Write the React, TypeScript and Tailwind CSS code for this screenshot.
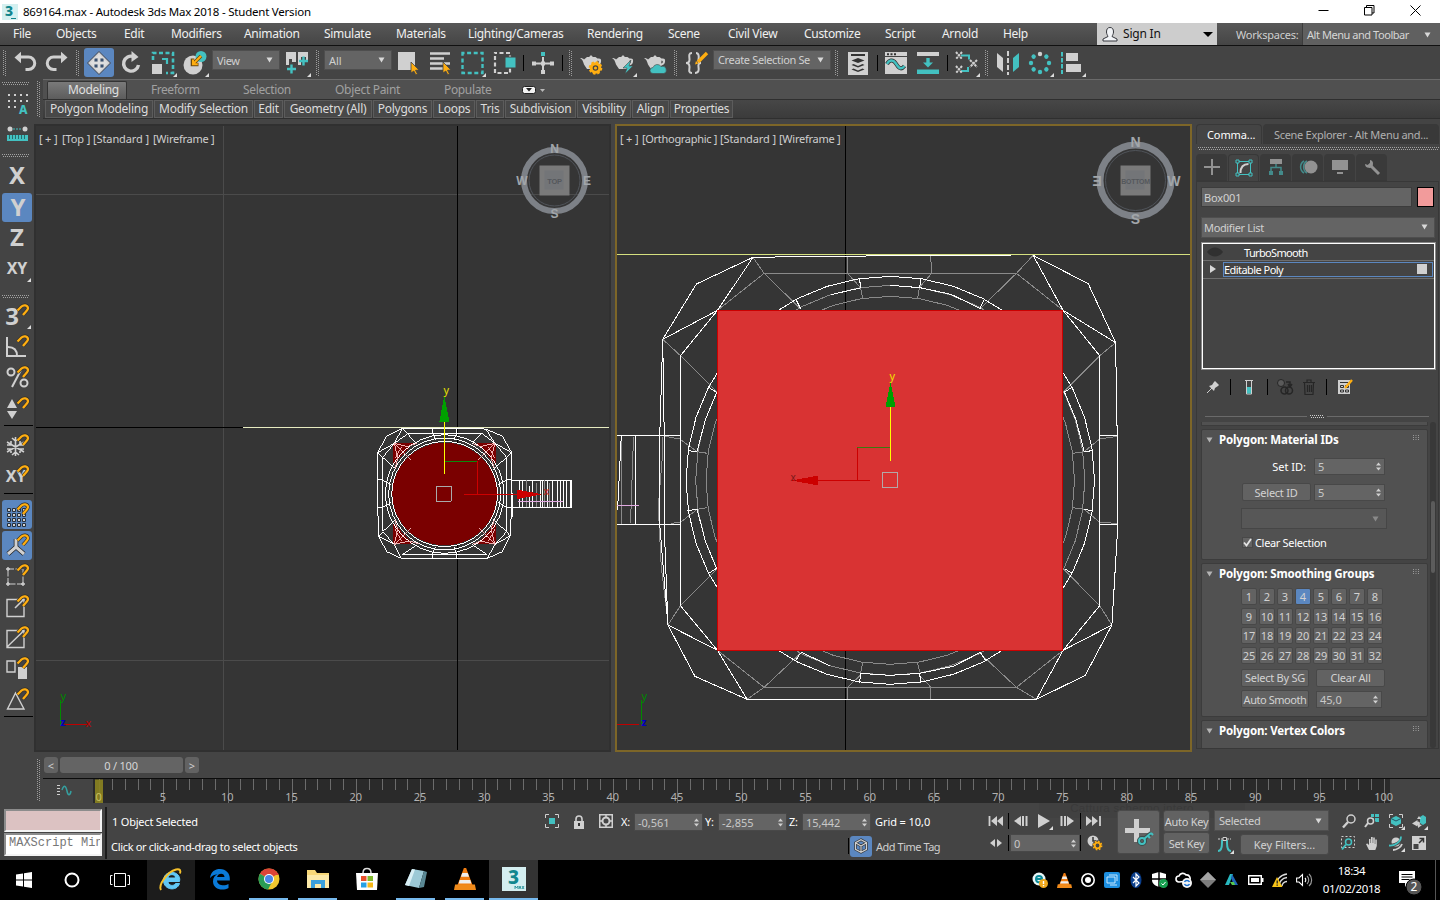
import React from 'react';

type Kids = { children?: React.ReactNode };

const W = '#d0d0d0';
const T = '#43c1c1';
const O = '#ffae10';

/* ---------- small building blocks ---------- */

function Ico({ children, w = 24, h = 24, corner = false }: Kids & { w?: number; h?: number; corner?: boolean }) {
  return (
    <svg width={w} height={h} viewBox={`0 0 ${w} ${h}`} fill="none" className="block shrink-0 overflow-visible">
      {children}
      {corner && <path d={`M${w + 2} ${h - 2}v4h-4z`} fill="#ddd" />}
    </svg>
  );
}

const Slot = ({ children, on = false }: Kids & { on?: boolean }) => (
  <div className="flex h-full w-8 shrink-0 items-center justify-center">
    <div className={on ? 'flex h-[29px] w-[30px] items-center justify-center rounded-[3px] bg-[#5b87c0]' : 'flex items-center justify-center'}>{children}</div>
  </div>
);

const VHandle = ({ cls }: { cls: string }) => (
  <div className={`flex shrink-0 justify-center ${cls}`}>
    <svg width="4" height="100%" className="block">
      <line x1="0.5" y1="0" x2="0.5" y2="100%" stroke="#9c9c9c" strokeDasharray="1 1" />
      <line x1="2.5" y1="1" x2="2.5" y2="100%" stroke="#9c9c9c" strokeDasharray="1 1" />
    </svg>
  </div>
);

const HHandle = ({ cls }: { cls: string }) => (
  <div className={`flex shrink-0 flex-col justify-center ${cls}`}>
    <svg width="100%" height="4" className="block">
      <line x1="0" y1="0.5" x2="100%" y2="0.5" stroke="#a2a2a2" strokeDasharray="1 1" />
      <line x1="1" y1="2.5" x2="100%" y2="2.5" stroke="#a2a2a2" strokeDasharray="1 1" />
    </svg>
  </div>
);

const VSep = ({ cls }: { cls: string }) => (
  <div className={`flex shrink-0 items-center justify-center ${cls}`}>
    <div className="h-4 w-px bg-black" />
  </div>
);

const Down = ({ c = '#d8d8d8' }: { c?: string }) => (
  <svg width="7" height="6" className="block shrink-0"><path d="M0.5 0.5h6L3.5 5.5z" fill={c} /></svg>
);

const Combo = ({ text, cls }: { text: string; cls: string }) => (
  <div className={`flex shrink-0 items-center justify-between border border-[#4e4e4e] bg-[#646464] pr-[6px] pl-[5px] text-[#d0d0d0] ${cls}`}>
    <span className="whitespace-nowrap">{text}</span>
    <Down />
  </div>
);

const Updown = () => (
  <svg width="5" height="9" className="block shrink-0"><path d="M0 3.5h5L2.5 0.5zM0 5.5h5L2.5 8.5z" fill="#d0d0d0" /></svg>
);

const Spin = ({ v, cls }: { v: string; cls: string }) => (
  <div className={`flex shrink-0 items-center justify-between border border-[#484848] bg-[#646464] pr-[3px] pl-[3px] tracking-normal text-[#c8c8c8] ${cls}`}>
    <span>{v}</span>
    <Updown />
  </div>
);

const Btn = ({ children, cls }: Kids & { cls: string }) => (
  <div className={`flex shrink-0 items-center justify-center rounded-[2px] border border-[#484848] bg-[#626262] whitespace-nowrap text-[#d2d2d2] ${cls}`}>{children}</div>
);

/* ---------- title + menu ---------- */

function TitleBar() {
  return (
    <div className="flex h-[23px] shrink-0 items-center bg-white pl-[2px] text-black">
      <div className="flex h-4 w-4 items-center justify-center bg-[#d4f0f0]">
        <Ico w={16} h={16}>
          <text x="3" y="12" fontSize="14" fontWeight="800" fill="#11858c" fontFamily="Noto Sans">3</text>
          <path d="M9 14.5h5" stroke="#11858c" />
        </Ico>
      </div>
      <span className="ml-[5px] text-[11.500px] tracking-[-0.220px] whitespace-nowrap">869164.max - Autodesk 3ds Max 2018 - Student Version</span>
      <div className="ml-auto flex h-full items-center pb-[2px]">
        <div className="flex w-[45px] justify-center"><Ico w={11} h={11}><path d="M0.5 5.5h10" stroke="#000" /></Ico></div>
        <div className="flex w-[46px] justify-center"><Ico w={11} h={11}><path d="M0.5 2.5h7.500v7.500h-7.500zM2.500 2.500v-2h7.500v7.500h-2" stroke="#000" /></Ico></div>
        <div className="flex w-[48px] justify-center pr-[2px]"><Ico w={11} h={11}><path d="M0.500 0.500l10 10M10.500 0.500l-10 10" stroke="#000" /></Ico></div>
      </div>
    </div>
  );
}

const MENUS: [string, string][] = [
  ['File', 'w-[43px]'], ['Objects', 'w-[68px]'], ['Edit', 'w-[47px]'], ['Modifiers', 'w-[73px]'], ['Animation', 'w-[80px]'],
  ['Simulate', 'w-[72px]'], ['Materials', 'w-[72px]'], ['Lighting/Cameras', 'w-[119px]'], ['Rendering', 'w-[81px]'], ['Scene', 'w-[60px]'],
  ['Civil View', 'w-[76px]'], ['Customize', 'w-[81px]'], ['Script', 'w-[57px]'], ['Arnold', 'w-[61px]'], ['Help', 'w-[94px]'],
];

function MenuBar() {
  return (
    <div className="flex h-[23px] shrink-0 items-center border-b border-[#111] bg-gradient-to-b from-[#585858] to-[#454545] pl-[13px] tracking-[-0.300px] text-[#f0f0f0]">
      {MENUS.map(([t, w]) => <div key={t} className={`shrink-0 whitespace-nowrap ${w}`}>{t}</div>)}
      <div className="flex h-full w-[120px] shrink-0 items-center bg-[#cdcdcd] pl-[5px] text-[#111]">
        <Ico w={16} h={16}>
          <path d="M4.500 6a3.500 4.500 0 0 1 7 0c0 2-1 3-1.500 4.500l5 2.500v2H1v-2l5-2.500C5.500 9 4.500 8 4.500 6z" fill="#f2f4f7" stroke="#34363c" />
        </Ico>
        <span className="ml-[5px] tracking-[-0.200px]">Sign In</span>
        <svg width="10" height="5" className="mr-1 ml-auto block"><path d="M0 0h10L5 5z" fill="#000" /></svg>
      </div>
      <span className="ml-[19px] w-[66px] shrink-0 pt-px text-[11px] tracking-[-0.220px] whitespace-nowrap text-[#cfcfcf]">Workspaces:</span>
      <div className="flex h-full flex-1 items-center border-l border-[#3c3c3c] bg-[#606060] pt-px pl-1 text-[11px] tracking-[-0.450px] whitespace-nowrap text-[#d6d6d6]">
        Alt Menu and Toolbar
        <span className="mr-[9px] ml-auto"><Down /></span>
      </div>
    </div>
  );
}

/* ---------- main toolbar ---------- */

const Teapot = () => (
  <path d="M1 7c2 0 3 .5 4 1.500L8 6h2.500c0-1 .5-1.500 1.500-1.500s1.500.5 1.500 1.500h3l2 1.500c3-.5 4 .5 3.500 3.500-.3 2-1.500 3-3.500 3.500L17 18H8l-3-4.500C4 10 3 8 1 7zm17.500 2.500l-.3 3c2 0 2.300-3 .3-3z" fill={W} />
);
const Cursor = () => <path d="M15 11l8 8-3.500.3 2 3.700-1.700.8-2-3.800L15 22z" fill={O} stroke="#444" strokeWidth=".8" />;

function MainToolbar() {
  return (
    <div className="flex h-[33px] shrink-0 items-center bg-[#444]">
      <VHandle cls="h-[26px] w-[9px]" />
      <Slot><Ico><path d="M6 6h9.500a5.500 5.500 0 0 1 0 12.500h-3" stroke={W} strokeWidth="3" /><path d="M1.500 6.500L8 .8v11.400z" fill={W} /></Ico></Slot>
      <Slot><Ico><path d="M18 6H8.500a5.500 5.500 0 0 0 0 12.500h3" stroke={W} strokeWidth="3" /><path d="M22.500 6.500L16 .8v11.400z" fill={W} /></Ico></Slot>
      <VHandle cls="h-[26px] w-[10px]" />
      <Slot on>
        <Ico>
          <path d="M12 .5L23.500 12 12 23.500.5 12z" fill={W} stroke="#3a4250" />
          <path d="M12 3l4 4H8zM12 21l4-4H8zM3 12l4-4v8zM21 12l-4-4v8zM11 7h2v10h-2zM7 11h10v2H7z" fill="#dedede" />
          <path d="M8 7.500h2.500v3H7.500V8zM13.500 7.500H16l.5.500v2.500h-3zM7.500 13.500h3v3H8l-.5-.5zM13.500 13.500h3V16l-.5.500h-2.500z" fill="#39506f" />
        </Ico>
      </Slot>
      <Slot><Ico><path d="M14.500 5.500A7.500 7.500 0 1 0 19.500 14" stroke={W} strokeWidth="3.400" /><path d="M12.500 0l7 6-7 5z" fill={W} /></Ico></Slot>
      <Slot>
        <Ico corner>
          <path d="M2 9V2h20v20h-7" stroke={T} strokeWidth="2.600" strokeDasharray="4 2.500" />
          <path d="M1 13h10v10H1z" fill={W} /><path d="M11 8h5v5" stroke={T} strokeWidth="2.200" />
        </Ico>
      </Slot>
      <Slot>
        <Ico corner>
          <circle cx="10" cy="14" r="9.500" fill={W} /><circle cx="18" cy="5.500" r="5.500" fill={T} />
          <path d="M18 5l-8 8M9.500 7.500v6h6" stroke="#6b4a10" strokeWidth="3.600" /><path d="M18 5l-8 8M10 8.500v4.800h4.800" stroke={O} strokeWidth="2" />
        </Ico>
      </Slot>
      <Combo text="View" cls="ml-px h-5 w-[68px] mb-[5px] !pl-[4px] text-[11px] tracking-[-0.400px]" />
      <div className="w-px shrink-0" />
      <Slot>
        <Ico corner><path d="M1 1h10v10H7v-3H4v6H1zM13 1h10v10h-2V6h-5v8h-3z" fill={W} /><path d="M2 18h9M6.500 13.500v9M14 10h9M18.500 5.500v9" stroke={T} strokeWidth="2.400" /></Ico>
      </Slot>
      <VHandle cls="h-[26px] w-[10px]" />
      <Combo text="All" cls="ml-px h-5 w-[68px] mb-[5px] !pl-[4px] text-[11px]" />
      <Slot><Ico><path d="M2 1h17v18H2z" fill={W} /><Cursor /></Ico></Slot>
      <Slot><Ico><path d="M2 2.500h20M2 7.500h14M2 12.500h20M2 17.500h13" stroke={W} strokeWidth="2.400" /><Cursor /></Ico></Slot>
      <Slot><Ico corner><path d="M2.500 2h20v20h-20z" stroke={T} strokeWidth="2.400" strokeDasharray="4 2.600" strokeDashoffset="2" /></Ico></Slot>
      <Slot><Ico><path d="M3 2h15v20H3z" stroke={W} strokeWidth="2.200" strokeDasharray="4 2.500" strokeDashoffset="2" /><path d="M13 6h11v11H13z" fill={T} stroke="#444" /></Ico></Slot>
      <VSep cls="w-[7px]" />
      <Slot><Ico><path d="M12 6v17M1 12.500h22" stroke={W} strokeWidth="2" /><path d="M10 1h4v4h-4z" fill={T} /><path d="M1 10.500h4v4H1zM19 10.500h4v4h-4zM10 19h4v4h-4zM10 10.500h4v4h-4z" fill={W} /></Ico></Slot>
      <VSep cls="w-[7px]" />
      <VHandle cls="h-[26px] w-[9px]" />
      <Slot><Ico><Teapot /><circle cx="16.500" cy="17" r="4.300" stroke={O} strokeWidth="3" fill="#444" /><circle cx="16.500" cy="17" r="5.800" stroke={O} strokeWidth="2" strokeDasharray="2.500 2" /><circle cx="16.500" cy="17" r="1.600" fill={O} /></Ico></Slot>
      <Slot><Ico corner><Teapot /><path d="M20 9l-8 8h4l-2 6 8-8h-4z" fill={T} stroke="#444" strokeWidth=".6" /></Ico></Slot>
      <Slot><Ico><Teapot /><path d="M10 22.500a3 3 0 0 1 0-6 4.500 4.500 0 0 1 8-1 3.500 3.500 0 0 1 3 7z" fill={T} stroke="#444" strokeWidth=".6" /></Ico></Slot>
      <VHandle cls="h-[26px] w-[10px]" />
      <Slot>
        <Ico>
          <path d="M7 2C3 2 4.500 6 4.500 8.500S3 12 1 12c2 0 3.500 1.500 3.500 4S3 22 7 22M11 2c3 0 3 4 2.500 6.500S14 12 16 12c-2 0-3 1.500-2.500 4S14 22 10 22" stroke={W} strokeWidth="2" />
          <path d="M22 2l-9 9" stroke={O} strokeWidth="3.400" /><path d="M10 13.500l1-3.500 2.500 2.500z" fill={O} />
        </Ico>
      </Slot>
      <Combo text="Create Selection Se" cls="h-5 w-[118px] mb-[6px] !pl-[4px] text-[11px] tracking-[-0.350px]" />
      <VHandle cls="ml-px h-[26px] w-[10px]" />
      <Slot>
        <Ico><path d="M2 1h20v23H2z" fill={W} /><path d="M5 4h14" stroke="#333" strokeWidth="2" /><path d="M5.500 9.500l6.500-2.500 6.500 2.500L12 12zM5.500 14l2-1 4.500 2 4.500-2 2 1-6.500 2.500zM5.500 18.500l2-1 4.500 2 4.500-2 2 1-6.500 2.500z" fill="#333" /></Ico>
      </Slot>
      <VSep cls="w-[6px]" />
      <Slot>
        <Ico><path d="M1 1h22v22H1z" fill={W} /><path d="M1 5.500h22" stroke="#444" /><path d="M3 3.200h2M6.500 3.200h2M10 3.200h2" stroke="#333" strokeWidth="2" /><path d="M3 13c2-4 6-5 8.500-1s5 8 9 3" stroke="#333" strokeWidth="4" /><path d="M3 13c2-4 6-5 8.500-1s5 8 9 3" stroke={T} strokeWidth="2.400" /></Ico>
      </Slot>
      <Slot><Ico><path d="M1 1h22v4H1z" fill={W} /><path d="M1 18.500h22v4.500H1z" fill={T} /><path d="M12 7v6" stroke={T} strokeWidth="3.400" /><path d="M7 11.500h10l-5 5z" fill={T} /></Ico></Slot>
      <VSep cls="w-[6px]" />
      <Slot>
        <Ico corner>
          <path d="M7 4.500h8v4M7 20h7v-4" stroke={T} strokeWidth="2" />
          <path d="M2 1l6 7M8 1L2 8M2 15l6 7M8 15l-6 7M16 9l7 7M23 9l-7 7" stroke={W} strokeWidth="2" strokeDasharray="2.400 .8" />
        </Ico>
      </Slot>
      <VHandle cls="h-[26px] w-[10px]" />
      <Slot><Ico><path d="M1 2l6 5v14l-6-5z" fill={W} /><path d="M12 0v24" stroke={W} strokeWidth="2" strokeDasharray="5 2" /><path d="M23 2l-6 5v14l6-5z" fill={T} /></Ico></Slot>
      <Slot>
        <Ico corner>
          <circle cx="12" cy="3" r="2.200" fill={W} />
          {[45, 90, 135, 180, 225, 270, 315].map((a) => <circle key={a} cx="12" cy="3" r="2.200" fill={T} transform={`rotate(${a} 12 12)`} />)}
        </Ico>
      </Slot>
      <Slot><Ico corner><path d="M2 1v22" stroke={T} strokeWidth="2" strokeDasharray="4.500 1.500" /><path d="M6 2h12v8H6zM6 13h15v8H6z" fill={W} /></Ico></Slot>
    </div>
  );
}

/* ---------- left toolbar ---------- */

const Side = ({ children, on = false }: Kids & { on?: boolean }) => (
  <div className={on ? 'my-px flex h-[29px] w-[30px] shrink-0 items-center justify-center rounded-[3px] bg-[#5b87c0] pb-px' : 'flex h-[31px] w-[30px] shrink-0 items-center justify-center pb-[3px]'}>{children}</div>
);
const Magnet = () => (
  <>
    <path d="M12.500 7.500l4-4c2-2 6-1.500 6.500 1.500.3 2-3 4-5 7" stroke="#33302a" strokeWidth="3.600" />
    <path d="M12.500 7.500l4-4c2-2 6-1.500 6.500 1.500.3 2-3 4-5 7" stroke={O} strokeWidth="2.300" />
  </>
);
const BigLetter = ({ t, s = 24, x = 12, y = 21 }: { t: string; s?: number; x?: number; y?: number }) => (
  <text x={x} y={y} textAnchor="middle" fontFamily="Noto Sans" fontWeight="700" fontSize={s} fill={W}>{t}</text>
);
const HSep = ({ cls }: { cls: string }) => <div className={`w-[29px] shrink-0 ${cls}`}><div className="h-px w-full bg-black" /></div>;

function LeftBar() {
  return (
    <div className="flex w-[34px] shrink-0 flex-col items-start bg-[#444] pl-[2px]">
      <HHandle cls="h-[9px] w-[27px]" />
      <Side><Ico>{[0, 1, 2].map((r) => [0, 1, 2, 3].map((c) => (r === 2 && c > 1 ? null : <path key={`${r}${c}`} d={`M${3 + c * 6} ${4 + r * 6}h2v2h-2z`} fill={W} />)))}<text x="14" y="24" fontSize="12" fontWeight="800" fill={T} fontFamily="Noto Sans">A</text></Ico></Side>
      <Side><Ico><circle cx="5" cy="8" r="2.500" fill={W} /><circle cx="20" cy="8" r="2.500" fill={W} /><path d="M8 8h9" stroke={T} strokeDasharray="2 1" /><path d="M2 14h21v6H2z" fill={T} /><path d="M4.500 14v4M7.500 14v4M10.500 14v4M13.500 14v4M16.500 14v4M19.500 14v4" stroke="#2a6a6a" /></Ico></Side>
      <HHandle cls="h-[11px] w-[27px]" />
      <Side><Ico><BigLetter t="X" /></Ico></Side>
      <Side on><Ico><BigLetter t="Y" x={13} /></Ico></Side>
      <Side><Ico><BigLetter t="Z" /></Ico></Side>
      <Side><Ico corner><BigLetter t="XY" s={16} x={12} y={18} /></Ico></Side>
      <HHandle cls="h-[16px] w-[27px] pt-[7px]" />
      <Side><Ico corner><BigLetter t="3" x={7} y={21.5} /><Magnet /></Ico></Side>
      <Side><Ico><path d="M2 3v19h19M3 13c6 0 9 3 9 9" stroke={W} strokeWidth="2" /><Magnet /></Ico></Side>
      <Side><Ico><circle cx="6" cy="7" r="3.500" stroke={W} strokeWidth="2" /><circle cx="19" cy="18" r="3.500" stroke={W} strokeWidth="2" /><path d="M17 3L7 22" stroke={W} strokeWidth="2" /><Magnet /></Ico></Side>
      <Side><Ico><path d="M2 12h10L7 3zM2 15h10l-5 8z" fill={W} /><Magnet /></Ico></Side>
      <HSep cls="ml-[2px] h-[6px]" />
      <Side><Ico><path d="M10.500 4v19M2 9l17 10M19 9L2 19M7 5l3.500 3L14 5M7 22l3.500-3 3.500 3M2 12h4V8M2 16h4v4M19 12h-4V8M19 16h-4v4" stroke={W} strokeWidth="1.600" /><Magnet /></Ico></Side>
      <Side><Ico><BigLetter t="XY" s={16} x={11} y={18} /><Magnet /></Ico></Side>
      <HSep cls="ml-[2px] h-[6px]" />
      <Side on><Ico>{[0, 1, 2, 3].map((r) => [0, 1, 2, 3].map((c) => <path key={`${r}${c}`} d={`M${2.500 + c * 5} ${6.500 + r * 5}h3v3h-3z`} fill={W} stroke="#26303c" />))}<Magnet /></Ico></Side>
      <Side on><Ico><path d="M11 6v8L3 21M11 14l8 7" stroke="#222" strokeWidth="4.500" /><path d="M11 6v8L3 21M11 14l8 7" stroke={W} strokeWidth="3" /><Magnet /></Ico></Side>
      <Side><Ico><path d="M3 6h15v15H3z" stroke={W} strokeDasharray="6 1.500" /><path d="M1 6h4M3 4v4M1 21h4M3 19v4M16 21h4M18 19v4" stroke={W} strokeWidth="1.400" /><Magnet /></Ico></Side>
      <Side><Ico><path d="M2 5.500h17v17H2z" stroke={W} strokeWidth="1.400" /><path d="M10 14l9-9" stroke={W} strokeWidth="1.600" /><Magnet /></Ico></Side>
      <Side><Ico><path d="M2 5.500h17v17H2zM2 22L19 5.500" stroke={W} strokeWidth="1.400" /><Magnet /></Ico></Side>
      <Side><Ico><path d="M2 5h8v11H2z" stroke={W} strokeWidth="1.400" /><path d="M13 11h9v12h-9z" fill={W} /><Magnet /></Ico></Side>
      <Side><Ico><path d="M10.500 6L2.500 22H19z" stroke={W} strokeWidth="1.400" /><Magnet /></Ico></Side>
      <HSep cls="ml-[2px] h-[6px]" />
    </div>
  );
}

/* ---------- ribbon ---------- */

const RIBBON: [string, string][] = [
  ['Polygon Modeling', 'w-[108px]'], ['Modify Selection', 'w-[99px]'], ['Edit', 'w-[29px]'], ['Geometry (All)', 'w-[88px]'], ['Polygons', 'w-[59px]'],
  ['Loops', 'w-[42px]'], ['Tris', 'w-[28px]'], ['Subdivision', 'w-[71px]'], ['Visibility', 'w-[54px]'], ['Align', 'w-[37px]'], ['Properties', 'w-[63px]'],
];

function Ribbon() {
  return (
    <div className="flex h-[40px] shrink-0">
      <VHandle cls="mt-[2px] h-[36px] w-[9px]" />
      <div className="flex flex-1 flex-col border-t border-[#6a6a6a] bg-[#505050]">
        <div className="flex h-[19px] items-end pl-1 text-[#a0a0a0]">
          <div className="flex h-[18px] w-[80px] items-center rounded-t-[2px] border border-b-0 border-[#333] bg-gradient-to-b from-[#7a7a7a] to-[#5c5c5c] pb-px pl-[20px] tracking-[-0.300px] text-[#e0e0e0]">Modeling</div>
          <span className="mb-[3px] ml-[24px] w-[92px] tracking-[-0.450px]">Freeform</span>
          <span className="mb-[3px] w-[92px] tracking-[-0.350px]">Selection</span>
          <span className="mb-[3px] w-[109px] tracking-[-0.300px]">Object Paint</span>
          <span className="mb-[3px] w-[78px] tracking-[-0.350px]">Populate</span>
          <svg width="26" height="12" className="mb-[3px] block"><rect x=".5" y="2.500" width="13" height="7" rx="2" fill="#f2f2f2" stroke="#222" /><path d="M4 4h6L7 7.500z" fill="#222" /><path d="M18 5h5l-2.500 3z" fill="#b8b8b8" /></svg>
        </div>
        <div className="flex h-[20px] items-center border-y border-[#2f2f2f] bg-gradient-to-b from-[#474747] to-[#3b3b3b] pl-[2px] tracking-[-0.260px] text-[#dcdcdc]">
          {RIBBON.map(([t, w]) => <div key={t} className={`mr-px flex h-[18px] shrink-0 items-center justify-center border border-[#5c5c5c] bg-[#484848] whitespace-nowrap ${w}`}>{t}</div>)}
        </div>
      </div>
    </div>
  );
}

/* ---------- viewports ---------- */

const Ring = ({ cx, cy, r, w, face, flip }: { cx: number; cy: number; r: number; w: number; face: string; flip?: boolean }) => {
  const d = r + (flip ? 3 : 2);
  const size = flip ? 14 : 12;
  const letter = (t: string, x: number, y: number, m = false) => (
    <text transform={`translate(${x} ${y + size / 3 + 0.5}) scale(${m ? -1 : 1} 1)`} textAnchor="middle" fontSize={size} fontWeight="700" fill="#a2a6aa" fontFamily="Liberation Sans">{t}</text>
  );
  return (
    <g>
      <circle cx={cx} cy={cy} r={r} fill="none" stroke="#7d8187" strokeWidth={w} />
      <circle cx={cx} cy={cy} r={r - w / 2 - 2} fill="none" stroke="#50545a" strokeWidth="1" />
      <rect x={cx - 15} y={cy - 15} width="30" height="30" fill="#7a7a7a" />
      <rect x={cx - 10} y={cy - 10} width="19" height="19" fill="#737578" />
      <text x={cx} y={cy + 3} textAnchor="middle" fontSize={flip ? 7 : 7.5} letterSpacing="-.3" fontWeight="700" fill="#55585c" fontFamily="Liberation Sans">{face}</text>
      {letter('N', cx, cy - d)}
      {letter('S', cx, cy + d)}
      {letter('W', flip ? cx + d : cx - d, cy, flip)}
      {letter('E', flip ? cx - d : cx + d, cy, flip)}
    </g>
  );
};

const LABEL = 'absolute top-[7px] left-[3px] flex text-[11px] leading-none tracking-[-0.100px] whitespace-pre text-[#cfcfcf]';

function TopView() {
  return (
    <div className="relative h-full w-[577px] shrink-0 border-2 border-[#303030] bg-[#353535]">
      <svg width="573" height="624" viewBox="36 126 573 624" className="block" fill="none">
        <g shapeRendering="crispEdges">
          <path d="M223.500 126v624M36 194.500h573M36 660.500h573" stroke="#4b4b4b" />
          <path d="M457.500 126v624M36 427.500h207" stroke="#000" />
          <path d="M243 427.500h366" stroke="#e6ebc0" />
          <g transform="translate(360 380) scale(.33333)">
            <ellipse cx="254" cy="342" rx="157" ry="154" fill="#7a0000" />
            <path d="M100 190h60l-60 65zM407 190h-55l55 65zM100 493h60l-60-65zM407 493h-55l55-65z" fill="#7a0000" />
            <g stroke="#fff" strokeWidth="3">
              <path d="M127 145L80 168 53 218v167l4 85 23 45 44 20h258l45-20 23-47 5-83V218l-28-50-49-20-18-3z" />
              <path d="M145 160h220M127 145l42 45M68 232v222M440 232v222M127 524h254M53 218l50-28 24-45M53 218l15 14 40 36M378 148l27 42 50 28M455 218l-15 14-40 36M57 470l46 23 21 42M57 470l11-15 40-36M450 468l-45 25-23 42M450 468l-10-13-40-36M127 524l45-30M381 524l-45-30M365 160l-30 32" />
              <path d="M68 232l35-42M440 232l-35-42M68 455l35 38M440 455l-35 38M145 160l-42 30M365 160l40 30" />
              <path d="M218 145v15l10 20M290 145v15l-8 20M218 535v-15l8-18M290 535v-15l-8-18M53 300h15l25 14M53 382h15l25-14M455 300h-15l-25 14M455 382h-15l-25-14" />
              <ellipse cx="254" cy="342" rx="178" ry="178" />
              <ellipse cx="254" cy="342" rx="168" ry="168" />
              <ellipse cx="254" cy="342" rx="159" ry="158" />
              <path d="M455 301h180v81H455M455 262l2 150M478 301v81M489 301v81M508 318v64M517 301v81M541 301v81M548 301v81M562 301v81M577 301v81M594 301v81M603 301v81M612 301v81M621 301v81M631 301v81" />
              <path d="M500 301v81M530 310v72M555 301v81M569 310v72" stroke="#8a8a8a" />
            </g>
            <path d="M103 190l50 50M103 190l40 10 28-10M103 190l10 45-8 30M405 190l-50 50M405 190l-45 10-22-10M405 190l-12 45 10 30M103 493l50-50M103 493l45-10 28 8M103 493l10-45-8-28M405 493l-50-50M405 493l-45-10-22 10M405 493l-12-45 10-28M125 200l-20 35M385 200l20 35M125 483l-20-35M385 483l20-35" stroke="#f0b0b0" strokeWidth="3" />
            <path d="M475 364h133" stroke="#e0a8e0" strokeWidth="3" />
            <path d="M253.500 244h99" stroke="#0a8a0a" strokeWidth="3" />
            <path d="M352.500 244v99M312 343.500h160" stroke="#cc0000" strokeWidth="3" />
            <path d="M253.500 125v156" stroke="#ffff00" strokeWidth="3" />
            <path d="M253 48l15 77h-30z" fill="#00a000" />
            <path d="M547 343l-75 14v-28z" fill="#cc0000" />
            <path d="M229.500 319.500h45v45h-45z" stroke="#aaa" strokeWidth="3" />
          </g>
          <path d="M60.500 700v25" stroke="#008a00" />
          <path d="M64 724.500h23" stroke="#c00000" />
        </g>
        <g fontFamily="Noto Sans" fontSize="11">
          <text x="443.500" y="394" fill="#e6e000">y</text>
          <text x="543.500" y="495" fill="#cc2020">x</text>
          <text x="60.500" y="700" fill="#008a00">y</text>
          <text x="85.500" y="727" fill="#c00000">x</text>
          <text x="60.500" y="726" fill="#0000c8" fontWeight="700" fontSize="10">z</text>
        </g>
        <Ring cx={554.500} cy={180.500} r={30.500} w={6} face="TOP" />
      </svg>
      <div className={LABEL}>
        <span className="w-[23px] tracking-[2.500px]">[+]</span>
        <span className="w-[31px]">[Top ]</span>
        <span className="w-[60px]">[Standard ]</span>
        <span className="tracking-[-0.250px]">[Wireframe ]</span>
      </div>
    </div>
  );
}

const ringPoints = (rx: number, ry: number) =>
  Array.from({ length: 40 }, (_, i) => {
    const a = (i * Math.PI) / 20;
    return `${(744 + rx * Math.sin(a)).toFixed(1)},${(721 - ry * Math.cos(a)).toFixed(1)}`;
  }).join(' ');

function OrthoView() {
  return (
    <div className="relative ml-[4px] h-full w-[577px] shrink-0 border-2 border-[#7d6628] bg-[#353535]">
      <svg width="573" height="624" viewBox="617 126 573 624" className="block" fill="none">
        <g shapeRendering="crispEdges">
          <path d="M845.500 126v624" stroke="#000" />
          <g transform="translate(615 240) scale(.37 .33333)">
            <g stroke="#8a8a8a" className="[&>*]:[vector-effect:non-scaling-stroke]">
              <path d="M373 52l30 48h682l45-54M628 50v50l35 42M853 47l3 53-33 42M403 100L277 211M403 100l98 106M1085 100l126 111M1085 100l-98 106" />
              <path d="M129 298l48 49 98 108M1353 308l-43 39-97 108M143 1155l34-58 98-109M1343 1155l-33-58-97-109" />
              <path d="M357 1378l46-36h682l54 36M403 1342l-126-111M403 1342l100-104M1085 1342l126-111M1085 1342l-100-104M628 1378v-36l34-35M854 1378v-36l-30-35" />
              <path d="M135 589l40 8 47 38M150 850l27-3 45-39M1357 589l-47 8-42 38M1357 850l-47-3-42-39" />
              <path d="M664 145l5 28M823 143l-5 30M664 1300l5-30M825 1300l-7-30M222 635l28 5M222 808l28-5M1268 635l-30 5M1268 808l-30-5" />
              <path d="M128 590v60L117 800l8 180 13 120M50 590L42 850M17 590v262" />
              <polygon points={ringPoints(498, 552)} />
              <polygon points={ringPoints(526, 585)} />
            </g>
            <g stroke="#fff" className="[&>*]:[vector-effect:non-scaling-stroke]">
              <polygon points={ringPoints(552, 612)} />
              <path d="M744 136l80 7 84 20 80 43M663 144l-80 20M502 1236l80 42M663 1300l81 6 80-6 90-21 74-42M222 634l22-94 31-83M222 808l22 95 31 84M1268 634l-22-94-31-83" />
              <path d="M373 52L220 132l-91 166-8 287v270l22 300 73 154 141 69h782l132-72 72-151 16-300-2-285-4-262-74-177-149-85" />
              <path d="M373 52l180-3 255-2h262M373 52l-96 159-100 136v750l100 134 80 147M129 298l148-87M143 1155l134 76M1130 46l81 165 99 136v750l-99 134-72 147M1353 308l-142-97M1343 1155l-132 76" />
              <path d="M129 298l4 287v270l10 300M5 586h172M5 853h172M1310 586h49M1310 853h49M56 586v267M17 586L7 810" />
              <path d="M661 116l3 28M827 116l-4 28M490 180l12 27M998 178l-12 28M196 632l26 3M196 812l26-4M1290 632l-22 3M1290 812l-22-4M661 1328l3-28M827 1328l-4-28M488 1262l14-24M1002 1262l-14-24M253 442l20 14M253 1000l20-14M1235 442l-20 14M1235 1000l-20-14" />
            </g>
            <path d="M5 797h60" stroke="#e0a8e0" className="[vector-effect:non-scaling-stroke]" />
          </g>
          <path d="M617 254.500h573" stroke="#d5e07f" />
          <path d="M717.500 310.500h345v340h-345z" fill="#d93333" stroke="#cc0000" />
          <path d="M857 447.500h33" stroke="#3c7a10" />
          <path d="M857.500 448v32M818 480.500h52" stroke="#cc0000" />
          <path d="M890.500 407v54" stroke="#ffff00" />
          <path d="M890.500 382l5 25h-10z" fill="#00a000" />
          <path d="M792 480.500l26-5v10z" fill="#cc0000" />
          <path d="M882.500 472.500h15v15h-15z" stroke="#b4a8a8" />
          <path d="M641.500 700v24" stroke="#008a00" />
          <path d="M617 724.500h22" stroke="#c00000" />
        </g>
        <g fontFamily="Noto Sans" fontSize="11">
          <text x="889.500" y="380" fill="#f0e000">y</text>
          <text x="790.500" y="481" fill="#7a1a1a" fontSize="10">x</text>
          <text x="641.500" y="700" fill="#008a00">y</text>
          <text x="641.500" y="726" fill="#0000c8" fontWeight="700" fontSize="10">z</text>
        </g>
        <Ring cx={1135.500} cy={180.500} r={35.500} w={7} face="BOTTOM" flip />
      </svg>
      <div className={LABEL}>
        <span className="w-[22px] tracking-[2.500px]">[+]</span>
        <span className="w-[78px] tracking-[-0.300px]">[Orthographic ]</span>
        <span className="w-[59px]">[Standard ]</span>
        <span className="tracking-[-0.250px]">[Wireframe ]</span>
      </div>
    </div>
  );
}

/* ---------- command panel ---------- */

const Rollout = ({ title, cls, children }: Kids & { title: string; cls: string }) => (
  <div className={`shrink-0 overflow-hidden rounded-[2px] border border-[#3c3c3c] bg-[#515151] text-[11px] ${cls}`}>
    <div className="flex h-[20px] items-center pr-[8px] pb-px pl-[4px] text-[11.500px] font-bold tracking-[-0.140px] whitespace-nowrap text-white">
      <Down c="#b4b4b4" />
      <span className="ml-[6px]">{title}</span>
      <svg width="6" height="6" className="mb-1 ml-auto block"><path d="M0 .5h6M0 2.500h6M0 4.500h6" stroke="#999" strokeDasharray="1 1.500" /></svg>
    </div>
    {children}
  </div>
);

const CTAB = 'flex h-[27px] w-[31px] shrink-0 items-center justify-center rounded-t-[4px] border-b border-[#383838] bg-[#3a3a3a]';
const G = '#929292';

function CommandPanel() {
  return (
    <div className="ml-[4px] flex flex-1 flex-col bg-[#444] pr-px text-[11px] leading-none tracking-[-0.250px]">
      <div className="flex h-[20px] text-[11px]">
        <div className="flex w-[66px] items-center rounded-t-[4px] border border-b-0 border-[#383838] pl-[10px] tracking-[-0.100px] text-white">Comma...</div>
        <div className="ml-px flex flex-1 items-center overflow-hidden rounded-t-[4px] bg-[#393939] pt-px pl-[11px] tracking-[-0.300px] whitespace-nowrap text-[#b0b0b0]">Scene Explorer - Alt Menu and...</div>
      </div>
      <HHandle cls="ml-[2px] h-[10px]" />
      <div className="flex gap-px">
        <div className={CTAB}><Ico w={16} h={16}><path d="M8 0v16M0 8h16" stroke={G} strokeWidth="2" /></Ico></div>
        <div className="flex h-[27px] w-[31px] shrink-0 items-center justify-center rounded-t-[4px] border border-b-0 border-[#383838]">
          <Ico w={18} h={18}><path d="M2.500 2.500h13v13h-13z" stroke={T} /><path d="M1 1h3v3H1zM14 1h3v3h-3zM1 14h3v3H1zM14 14h3v3h-3z" fill="#444" stroke={T} /><path d="M5.500 14c0-5 2-9 8-9" stroke={W} strokeWidth="2" /></Ico>
        </div>
        <div className={CTAB}><Ico w={16} h={16}><path d="M2 0h12v5H2z" fill={G} /><path d="M8 5v3M3 12V8.500h10V12" stroke="#438a8a" strokeWidth="1.500" /><path d="M1 12h4v4H1zM11 12h4v4h-4z" fill="#438a8a" /></Ico></div>
        <div className={CTAB}><Ico w={18} h={16}><path d="M5 2a7 7 0 0 0 0 12M8 2a7 7 0 0 0 0 12" stroke="#438a8a" strokeWidth="1.500" /><circle cx="12" cy="8" r="6.500" fill={G} /></Ico></div>
        <div className={CTAB}><Ico w={16} h={16}><path d="M0 1h16v10H0zM5 13h6v2H5z" fill={G} /></Ico></div>
        <div className={CTAB}><Ico w={16} h={16}><path d="M5 5l10 10" stroke={G} strokeWidth="3" /><path d="M1 5a4 4 0 1 0 5-4v3L4 6z" fill={G} /></Ico></div>
      </div>
      <div className="flex h-[568px] flex-col border border-[#383838] pt-[5px] pl-[4px]">
        <div className="flex h-[21px] items-center">
          <div className="flex h-5 w-[211px] items-center border border-[#3c3c3c] bg-[#646464] pl-[2px] tracking-[-0.150px] text-[#d2d2d2]">Box001</div>
          <div className="ml-[5px] h-5 w-[17px] border border-black bg-[#f29b9b]" />
        </div>
        <Combo text="Modifier List" cls="mt-[9px] h-[21px] w-[234px] !pl-[2px] tracking-[-0.350px]" />
        <div className="mt-[4px] flex h-[129px] w-[235px] flex-col border border-[#888] bg-[#444] pt-px tracking-[-0.550px] text-white outline-1 -outline-offset-2 outline-white">
          <div className="flex h-[17px] shrink-0 items-center border-b border-[#6e6e6e] pt-px">
            <svg width="16" height="10" className="ml-[5px] block"><path d="M0 5c4-6 12-6 16 0-4 6-12 6-16 0z" fill="#303030" /></svg>
            <span className="ml-[21px] tracking-[-0.650px]">TurboSmooth</span>
          </div>
          <div className="flex h-[18px] shrink-0 items-center border-b border-[#6e6e6e]">
            <svg width="6" height="8" className="ml-[8px] block"><path d="M0 0l6 4-6 4z" fill="#d8d8d8" /></svg>
            <div className="ml-[7px] flex h-[15px] w-[210px] items-center border border-[#5b87c0] pr-[5px]">Editable Poly<span className="ml-auto h-[10px] w-[10px] bg-[#d0d0d0]" /></div>
          </div>
        </div>
        <div className="mt-[7px] flex h-[20px] items-center pl-[5px]">
          <Ico w={14} h={16}><path d="M1 14l5-5" stroke={W} /><path d="M3 7l5 5 1-3 3-2 1-1-4-4-1 1-2 3z" fill={W} /></Ico>
          <VSep cls="w-[20px]" />
          <div className="flex w-[17px] justify-center"><Ico w={8} h={16}><path d="M0 1.500h8M1.500 1v14h5V1" stroke={W} /><path d="M2 8h4v6.500H2z" fill={T} /></Ico></div>
          <VSep cls="w-[20px]" />
          <Ico w={17} h={16}><circle cx="4" cy="4" r="3.500" fill="#5a5a5a" stroke="#262626" /><path d="M9 3h4v5M15 5l-2 3-2-3" stroke="#262626" strokeWidth="1.500" /><circle cx="7.500" cy="11.500" r="3.500" stroke="#262626" strokeWidth="1.500" /><circle cx="12" cy="11.500" r="3.500" stroke="#262626" strokeWidth="1.500" /></Ico>
          <div className="ml-[9px]"><Ico w={12} h={16}><path d="M0 3.500h12M4 3V1h4v2M1.500 4l.5 11.500h8L10.500 4M4.500 6v7M6.500 6v7M8.500 6v7" stroke="#262626" strokeWidth="1.200" /></Ico></div>
          <VSep cls="w-[23px]" />
          <Ico w={15} h={16}><path d="M0 1h12v14H0z" fill={W} /><path d="M2 3.500h8M2.500 6.500h3v2h-3zM7.500 6.500h3v2h-3zM2.500 11h3v2h-3zM7.500 11h3v2h-3z" stroke="#333" /><path d="M14 1L7 9" stroke={O} strokeWidth="2.400" /></Ico>
        </div>
        <div className="mt-[14px] flex h-[10px] items-center pl-1">
          <div className="h-px w-[102px] bg-[#6a6a6a]" />
          <div className="w-[20px] pl-[3px]"><svg width="14" height="3" className="block"><path d="M0 .5h14M1 2.500h14" stroke="#ccc" strokeDasharray="1 1" /></svg></div>
          <div className="h-px w-[102px] bg-[#6a6a6a]" />
        </div>
        <div className="mt-px flex h-[327px] overflow-hidden">
          <div className="flex w-[228px] shrink-0 flex-col overflow-hidden">
            <div className="h-[4px] w-[227px] shrink-0 border border-t-0 border-[#3c3c3c] bg-[#515151]" />
            <Rollout title="Polygon: Material IDs" cls="mt-[3px] h-[131px] w-[227px]">
              <div className="mt-[7px] flex h-[18px] items-center">
                <span className="w-[105px] pr-[1px] text-right tracking-normal text-white">Set ID:</span>
                <Spin v="5" cls="ml-[7px] h-[17px] w-[71px]" />
              </div>
              <div className="mt-[8px] flex h-[18px] items-center pl-[40px]">
                <Btn cls="h-[18px] w-[69px] pr-px">Select ID</Btn>
                <Spin v="5" cls="ml-[3px] h-[17px] w-[71px]" />
              </div>
              <div className="mt-[7px] ml-[39px] flex h-[21px] w-[146px] items-center justify-end border border-[#464646] bg-[#575757] pr-[7px]"><Down c="#8a8a8a" /></div>
              <div className="mt-[7px] ml-[40px] flex h-[12px] items-center">
                <div className="flex h-[11px] w-[11px] items-center justify-center border border-[#484848] bg-[#646464]"><svg width="9" height="9"><path d="M1 4.500l2.500 3L8 1" stroke="#e4e4e4" strokeWidth="1.800" fill="none" /></svg></div>
                <span className="ml-[2px] tracking-[-0.330px] whitespace-nowrap text-white">Clear Selection</span>
              </div>
            </Rollout>
            <Rollout title="Polygon: Smoothing Groups" cls="mt-[3px] h-[154px] w-[227px]">
              <div className="mt-[4px] ml-[39px] grid w-[144px] grid-cols-[repeat(8,18px)] gap-y-[2.500px] tracking-normal">
                {Array.from({ length: 32 }, (_, i) => (
                  <div key={i} className={`flex h-[17px] w-[16px] items-center justify-center rounded-[2px] border border-[#484848] text-[#d2d2d2] ${i === 3 ? 'bg-[#5b87c0]' : 'bg-[#626262]'}`}>{i + 1}</div>
                ))}
              </div>
              <div className="mt-[5px] ml-[39px] flex h-[18px]">
                <Btn cls="h-[18px] w-[68px]">Select By SG</Btn>
                <Btn cls="ml-[7px] h-[18px] w-[69px]">Clear All</Btn>
              </div>
              <div className="mt-[3px] ml-[39px] flex h-[18px] items-center pt-px">
                <Btn cls="h-[18px] w-[68px] tracking-[-0.450px]">Auto Smooth</Btn>
                <Spin v="45,0" cls="ml-[7px] h-[17px] w-[66px]" />
              </div>
            </Rollout>
            <Rollout title="Polygon: Vertex Colors" cls="mt-[3px] h-[40px] w-[227px]" />
          </div>
          <div className="ml-[1px] w-[6px] rounded-full bg-[#393939] pt-[79px]"><div className="ml-px h-[72px] w-[4px] rounded-full bg-[#5c5c5c]" /></div>
        </div>
      </div>
    </div>
  );
}

/* ---------- timeline ---------- */

function Timeline() {
  return (
    <div className="flex h-[51px] shrink-0 text-[11px]">
      <VHandle cls="mt-[7px] h-[42px] w-[9px]" />
      <div className="flex flex-1 flex-col">
        <div className="flex h-[26px] items-center">
          <div className="ml-px flex h-4 w-[14px] items-center justify-center rounded-[3px] bg-[#626262] text-[#d0d0d0]">&lt;</div>
          <div className="ml-[2px] flex h-4 w-[123px] items-center justify-center rounded-[3px] bg-[#646464] pr-px tracking-[-0.200px] text-[#d6d6d6]">0 / 100</div>
          <div className="ml-[2px] flex h-4 w-[14px] items-center justify-center rounded-[3px] bg-[#626262] text-[#d0d0d0]">&gt;</div>
        </div>
        <svg width="1397" height="25" viewBox="43 778 1397 25" className="block">
          <path d="M43 778.500h1397" stroke="#0c0c0c" />
          <path d="M93 779h1297v24H93z" fill="#2a2a2a" />
          <g shapeRendering="crispEdges">
            {Array.from({ length: 101 }, (_, i) => <line key={i} x1={99.500 + i * 12.850} x2={99.500 + i * 12.850} y1="779" y2={i % 5 === 0 ? 803 : 790} stroke="#6c6c6c" />)}
          </g>
          <path d="M57 785.500h3M57 788.500h3M57 791.500h3M57 794.500h3" stroke={W} />
          <path d="M62 790c2-6 4-4 5 1s3 5 4 0" stroke="#35a0a0" strokeWidth="1.500" fill="none" />
          <rect x="95" y="779.500" width="8" height="24" fill="#8c8420" fillOpacity=".9" />
          <g fontFamily="Noto Sans" fontSize="11" textAnchor="middle">
            {Array.from({ length: 21 }, (_, i) => <text key={i} x={98.700 + i * 64.250} y="801" fill={i ? '#b2b2b2' : '#c8c060'}>{i * 5}</text>)}
          </g>
        </svg>
      </div>
    </div>
  );
}

/* ---------- status ---------- */

const CELL = 'flex h-[22px] items-center justify-center';

function StatusBar() {
  return (
    <div className="relative isolate flex h-[57px] shrink-0 overflow-hidden bg-[#444] text-[11px] leading-none tracking-[-0.250px] text-white">
      <div className="absolute top-0 left-[1039px] -z-10 flex h-[15px] w-[206px] justify-center bg-[#414141] text-[11.500px] text-[#3a3a3a]">
        <span className="mr-[20px] font-['Liberation_Sans'] tracking-[0.300px]">Cattura schermo intero</span>
      </div>
      <div className="ml-[4px] w-[98px] shrink-0 pt-[6px]">
        <div className="h-[23px] border-2 border-[#f4f4f4] border-t-[#8c8c8c] border-l-[#8c8c8c] bg-[#dcc2c2]" />
        <div className="mt-px flex h-[23px] items-center overflow-hidden border-2 border-[#f4f4f4] border-t-[#8c8c8c] border-l-[#8c8c8c] bg-white pb-[3px] pl-[3px] font-['Liberation_Mono'] text-[12px] leading-4 tracking-normal whitespace-nowrap text-[#777]">MAXScript Mini</div>
      </div>
      <div className="mt-[4px] ml-[3px] h-[52px] w-[2px] bg-[#1c1c1c]" />
      <div className="ml-[5px] flex w-[429px] shrink-0 flex-col pt-[7px] tracking-[-0.320px]">
        <div className="flex h-[22px] items-center tracking-[-0.200px]">1 Object Selected</div>
        <div className="mt-[3px] -ml-px flex h-[22px] items-center">Click or click-and-drag to select objects</div>
      </div>
      <div className="flex w-[447px] shrink-0 flex-col pt-[7px]">
        <div className="flex h-[23px] items-center">
          <div className="flex w-[22px] justify-center pb-px"><Ico w={14} h={14}><path d="M.5 4V.5H4M10 .5h3.500V4M13.500 10v3.500H10M4 13.500H.5V10" stroke={W} /><path d="M4 4h6v6H4z" fill={T} /></Ico></div>
          <div className="flex w-[32px] justify-center"><Ico w={10} h={14}><path d="M0 6h10v8H0z" fill={W} /><path d="M2 6V4a3 3 0 0 1 6 0v2" stroke={W} strokeWidth="1.600" /><path d="M5 8v3" stroke="#333" strokeWidth="2" /></Ico></div>
          <div className="flex w-[22px] justify-center pb-px"><Ico w={14} h={14}><path d="M.75 .75h12.500v12.500H.75z" stroke={W} strokeWidth="1.500" /><circle cx="7" cy="7" r="3.500" stroke={W} strokeWidth="2" /><path d="M7 0v4M7 10v4M0 7h4M10 7h4" stroke={W} strokeWidth="1.500" /></Ico></div>
          <span className="ml-[4px] w-[13px]">X:</span><Spin v="-0,561" cls="h-[18px] w-[69px] pt-px" />
          <span className="ml-[2px] w-[13px]">Y:</span><Spin v="-2,855" cls="h-[18px] w-[69px] pt-px" />
          <span className="ml-[2px] w-[13px]">Z:</span><Spin v="15,442" cls="h-[18px] w-[69px] pt-px" />
          <span className="ml-[4px] tracking-[-0.080px] whitespace-nowrap">Grid = 10,0</span>
        </div>
        <div className="mt-[2px] flex h-[22px] items-center">
          <div className="ml-[307px] h-4 w-px bg-black" />
          <div className="ml-px flex h-[21px] w-[22px] items-center justify-center rounded-[3px] bg-[#5b87c0]"><Ico w={14} h={14}><path d="M7 .7l5.500 3v6.600L7 13.300l-5.500-3V3.700zM1.500 3.700L7 7l5.500-3.300M7 7v6.300" stroke="#333" strokeWidth="2.600" /><path d="M7 .7l5.500 3v6.600L7 13.300l-5.500-3V3.700zM1.500 3.700L7 7l5.500-3.300M7 7v6.300" stroke={W} strokeWidth="1.200" /></Ico></div>
          <span className="ml-[4px] tracking-[-0.480px] text-[#cfcfcf]">Add Time Tag</span>
        </div>
      </div>
      <div className="flex w-[129px] shrink-0 flex-col pt-[7px]">
        <div className="flex h-[22px] items-center">
          <Ico w={15} h={12}><path d="M1.500 1v10" stroke={W} strokeWidth="1.800" /><path d="M9 1v10L3 6zM15 1v10L9 6z" fill={W} /></Ico>
          <VSep cls="w-[11px]" />
          <Ico w={14} h={12}><path d="M7 1v10L0 6z" fill={W} /><path d="M9 1v10M12.500 1v10" stroke={W} strokeWidth="2" /></Ico>
          <div className="ml-[9px]"><Ico w={14} h={14} corner><path d="M1 0l12 7-12 7z" fill={W} /></Ico></div>
          <div className="ml-[9px]"><Ico w={14} h={12}><path d="M1.500 1v10M5 1v10" stroke={W} strokeWidth="2" /><path d="M7 1v10l7-5z" fill={W} /></Ico></div>
          <VSep cls="w-[12px]" />
          <Ico w={15} h={12}><path d="M14 1v10" stroke={W} strokeWidth="1.800" /><path d="M0 1v10l6-5zM6 1v10l6-5z" fill={W} /></Ico>
        </div>
        <div className="flex h-[22px] items-center">
          <div className="flex w-[16px] justify-center"><Ico w={12} h={8}><path d="M5 0v8L0 4zM7 0v8l5-4z" fill={W} /></Ico></div>
          <div className="ml-[4px] h-4 w-px bg-black" />
          <Spin v="0" cls="ml-px h-[18px] w-[70px]" />
          <div className="h-4 w-px bg-black" />
          <div className="ml-[6px]"><Ico w={16} h={16}><circle cx="6" cy="6" r="5.500" fill={W} /><path d="M6 2v4h3" stroke="#333" strokeWidth="1.500" /><circle cx="10.500" cy="10.500" r="3" stroke="#444" strokeWidth="4.500" /><circle cx="10.500" cy="10.500" r="2.800" stroke={O} strokeWidth="1.800" /><circle cx="10.500" cy="10.500" r="4.200" stroke={O} strokeWidth="1.400" strokeDasharray="1.700 1.600" /></Ico></div>
        </div>
      </div>
      <div className="mt-[7px] flex h-[44px] w-[43px] shrink-0 items-center justify-center rounded-[3px] border border-[#4a4a4a] bg-[#626262]">
        <Ico w={28} h={28}><path d="M9 1h5v9h11v5H14v9H9v-9H0v-5h9z" fill={W} /><g stroke="#3a4a4a" strokeWidth="4"><circle cx="17" cy="23" r="3" /><path d="M19 21l7-6" /></g><g stroke={T} strokeWidth="2"><circle cx="17" cy="23" r="3" /><path d="M19 21l7-6M23 18l2 2M26 15l2 2" /></g></Ico>
      </div>
      <div className="ml-[3px] flex w-[47px] shrink-0 flex-col pt-[7px] tracking-[-0.250px]">
        <Btn cls="h-[22px] w-[47px] rounded-[3px]">Auto Key</Btn>
        <Btn cls="h-[22px] w-[47px] rounded-[3px]">Set Key</Btn>
      </div>
      <div className="ml-[4px] flex w-[115px] shrink-0 flex-col pt-[7px]">
        <Combo text="Selected" cls="h-[21px] w-[115px] !pl-[4px]" />
        <div className="mt-[2px] flex h-[22px] items-center">
          <div className="ml-[3px] w-[23px]"><Ico w={15} h={15} corner><path d="M1 14c3 0 4-3 4-8V3M14 14c-3 0-4-3-4-8V3" stroke={T} strokeWidth="2" /><path d="M1 2h13" stroke={W} strokeDasharray="2 1" /><path d="M6 .5h3.500v3H6z" fill="#333" stroke={W} /></Ico></div>
          <Btn cls="h-[21px] w-[89px] rounded-[3px] tracking-normal">Key Filters...</Btn>
        </div>
      </div>
      <div className="mt-[7px] ml-[8px] grid w-[94px] shrink-0 grid-cols-[repeat(4,23.500px)] content-start">
        <div className={CELL}><Ico w={14} h={14}><circle cx="9" cy="5" r="4" stroke={W} strokeWidth="1.500" /><path d="M6 8l-5 5.500" stroke={W} strokeWidth="2.400" /></Ico></div>
        <div className={CELL}><Ico w={14} h={14}><path d="M6 0h8v8h-3L6 4z" fill={T} /><path d="M9.500 0v8M6 3.500h8" stroke="#444" /><circle cx="5.500" cy="7" r="3" stroke={W} strokeWidth="1.500" fill="#444" /><path d="M3 9l-3 4" stroke={W} strokeWidth="2" /></Ico></div>
        <div className={CELL}><Ico w={14} h={14} corner><path d="M.5 4V.5H4M10 .5h3.500V4M13.500 10v3.500H10M4 13.500H.5V10" stroke={W} /><path d="M7 2l5 2.500v5L7 12 2 9.500v-5z" fill={T} /><path d="M2 4.500L7 7l5-2.500" stroke="#256" /></Ico></div>
        <div className={CELL}><Ico w={14} h={14} corner><path d="M8 3l3-2 3 2v6l-3 2-3-2z" fill={T} /><path d="M5.500 6L0 9.500l5.500 3z" fill={W} /><path d="M5 5l2-3 2 3zM6 14l4-3-4-1z" fill={W} /><circle cx="6" cy="9.500" r="2" fill={W} /></Ico></div>
        <div className={CELL}><Ico w={15} h={14}><path d="M.5 .5h13v11H.5z" stroke={W} strokeDasharray="2 2" /><circle cx="7.500" cy="6" r="3" stroke={T} strokeWidth="1.500" /><path d="M5 8.500l-4 5" stroke={T} strokeWidth="2" /></Ico></div>
        <div className={CELL}><Ico w={12} h={15}><path d="M3 14L0 8l1.500-.5L3 9V3h1.500v4H5V1h1.700v6h.5V1.500h1.600V8h.5V3.500h1.500V10l-1.500 4z" fill={W} /></Ico></div>
        <div className={CELL}><Ico w={14} h={14} corner><circle cx="7" cy="6" r="4.500" fill={W} /><path d="M0 9c5 1 12-2 13-8M10 12l3-4" stroke="#444" strokeWidth="3" /><path d="M0 9.500c5 .5 12-3 12-9" stroke={T} strokeWidth="1.800" /><path d="M4 14c4 0 8-3 9-6" stroke={W} strokeWidth="1.800" /></Ico></div>
        <div className={CELL}><Ico w={14} h={14}><path d="M0 0h14v14H0z" fill={W} /><path d="M1.500 8h5v5h-5z" fill="#444" /><path d="M7 7l4-4M7.500 2.500h4v4" stroke="#333" strokeWidth="1.500" /></Ico></div>
      </div>
    </div>
  );
}

/* ---------- taskbar ---------- */

const Task = ({ children, line = false }: Kids & { line?: boolean }) => (
  <div className="flex h-full w-[49px] shrink-0 flex-col items-center">
    <div className="flex h-[38px] items-center justify-center">{children}</div>
    {line && <div className="h-[2px] w-[39px] bg-[#76b9ed]" />}
  </div>
);
const Cone = ({ s }: { s: number }) => (
  <svg width={s} height={s} viewBox="0 0 20 20"><path d="M9 0h2l6 16H3z" fill="#f07c10" /><path d="M7.500 4.500h5l1.200 3.500H6.300zM5.200 11h9.600l1 3H4.200z" fill="#eee" /><path d="M1 15h18l1 5H0z" fill="#f08a1a" /></svg>
);
const Tray = ({ children }: Kids) => <div className="flex h-full w-6 shrink-0 items-center justify-center">{children}</div>;

function Taskbar() {
  return (
    <div className="flex h-[40px] shrink-0 items-stretch bg-black text-white">
      <div className="flex w-[48px] items-center justify-center"><Ico w={16} h={16}><path d="M0 2.500L7 1.500v6H0zM8 1.300L16 0v7.500H8zM0 8.500h7v6l-7-1zM8 8.500h8V16l-8-1.200z" fill="#fff" /></Ico></div>
      <div className="flex w-[48px] items-center justify-center"><Ico w={16} h={16}><circle cx="8" cy="8" r="6.500" stroke="#fff" strokeWidth="2" /></Ico></div>
      <div className="flex w-[51px] items-center justify-center pr-[3px]"><Ico w={20} h={14}><path d="M4.500 .5h11v13h-11zM2.500 2.500h-2v9h2M17.500 2.500h2v9h-2" stroke="#fff" /></Ico></div>
      <div className="flex h-full w-[48px] shrink-0 items-center justify-center bg-[#1c1c1c]"><Ico w={24} h={24}><path d="M20.500 13.500H9c0 4.500 6 5 7.500 2h4C18 24 4.500 22 4.500 12.500S17.500 1.500 20.500 9.500c.4 1.300.3 2.500 0 4zM9 10h7.500c0-4.500-7-4.500-7.500 0z" fill="#62c8f4" stroke="#62c8f4" /><path d="M2 22C-1 17 8 4 17 1.500c4-1 5 1 4 4" stroke="#f5c02c" strokeWidth="2" /></Ico></div>
      <Task><Ico w={22} h={22}><path d="M1 10C2 3.500 6 1 11 1c6 0 10 4.500 9.800 9.500v2H8c.3 5 7.500 6 11.500 3.500v4C13 23.500 4 21 4 13.500c0-4 2-6 4.500-7.200C5 7 2.500 8 1 10zM8 9h7.500c0-4.500-6.500-4.500-7.500 0z" fill="#0a7ad8" /></Ico></Task>
      <Task line><Ico w={22} h={22}><circle cx="11" cy="11" r="10.500" fill="#f0c62e" /><path d="M11 11L1.900 5.700A10.500 10.500 0 0 1 20.100 5.700z" fill="#dc4437" /><path d="M1.900 5.700A10.500 10.500 0 0 0 10 21.500L14.500 13 11 11z" fill="#2a9c56" /><path d="M11 6h9.200" stroke="#dc4437" strokeWidth="2" /><circle cx="11" cy="11" r="5" fill="#fff" /><circle cx="11" cy="11" r="4" fill="#4a86e8" /></Ico></Task>
      <Task line><Ico w={22} h={20}><path d="M0 1h8l2 3h12v15H0z" fill="#f7d778" /><path d="M0 6h22v13H0z" fill="#fce9a8" /><path d="M4 19v-8h14v8h-4v-4H8v4z" fill="#3aa0dc" /></Ico></Task>
      <Task><Ico w={24} h={24}><path d="M1 6h22l-1 17H2z" fill="#fff" /><path d="M8 6c0-6 8-6 8 0" stroke="#ddd" strokeWidth="1.500" /><path d="M6 9h5.500v5H6z" fill="#e8502c" /><path d="M12.500 9H18v5h-5.500z" fill="#80b82c" /><path d="M6 15.500h5.500v5H6z" fill="#28a0e4" /><path d="M12.500 15.500H18v5h-5.500z" fill="#f8b818" /></Ico></Task>
      <Task line><Ico w={22} h={22}><path d="M7 1l12 2-5 17L0 17z" fill="#9cc9d6" /><path d="M7 1l3 .6L4 18l-4-1z" fill="#d8eef4" /><path d="M19 3l-5 17 5-1 3-15z" fill="#5a8894" /></Ico></Task>
      <Task line><Cone s={22} /></Task>
      <div className="flex w-[49px] shrink-0 flex-col items-center bg-[#333]">
        <div className="flex h-[38px] items-center"><div className="h-6 w-6 bg-[#d4eef0]"><Ico w={24} h={24}><text x="6" y="17" fontSize="19" fontWeight="800" fill="#12878e" fontFamily="Noto Sans">3</text><path d="M13 22v-3l1.500 2 1.500-2v3M17 22l1-3 1 3M20 19l2 3M22 19l-2 3" stroke="#12878e" strokeWidth=".8" /></Ico></div></div>
        <div className="h-[2px] w-full bg-[#76b9ed]" />
      </div>
      <div className="ml-auto flex items-center">
        <Tray><Ico w={16} h={16}><circle cx="7" cy="7" r="6.500" fill="#e8f6f8" /><path d="M4 7h6c0-4-6-4-6 0s4 4 6 2" stroke="#0a8a98" strokeWidth="2" /><circle cx="11.500" cy="11.500" r="4.500" fill="#f0a81c" /><path d="M11.500 9v3M11.500 13v1.200" stroke="#fff" strokeWidth="1.400" /></Ico></Tray>
        <Tray><Cone s={15} /></Tray>
        <Tray><Ico w={16} h={16}><circle cx="8" cy="8" r="6.200" stroke="#fff" strokeWidth="1.600" /><circle cx="8" cy="8" r="3" fill="#fff" /></Ico></Tray>
        <Tray><Ico w={16} h={16}><rect width="16" height="16" rx="2" fill="#1d8fe0" /><path d="M3 5h8v6H3zM5 3h8v6M6 13h7" stroke="#c8e8ff" /></Ico></Tray>
        <Tray><Ico w={12} h={16}><ellipse cx="6" cy="8" rx="5.500" ry="8" fill="#0b3f8c" /><path d="M3 5l6 6-3 3V2l3 3-6 6" stroke="#fff" strokeWidth="1.200" /></Ico></Tray>
        <Tray><Ico w={16} h={16}><path d="M7 0l7 2v6c0 4-4 6-7 7-3-1-7-3-7-7V2z" fill="#fff" /><path d="M7 0v15M0 7h14" stroke="#000" strokeWidth="1.500" /><circle cx="11.500" cy="11.500" r="4.500" fill="#18a050" /><path d="M9.500 11.500l1.500 1.500 2.500-3" stroke="#fff" /></Ico></Tray>
        <Tray><Ico w={16} h={16}><path d="M3 10a3 3 0 0 1 0-6 4 4 0 0 1 7-1 3.500 3.500 0 0 1 3 6z" stroke="#fff" strokeWidth="1.600" /><circle cx="11" cy="11" r="5" fill="#f4f4f4" /><path d="M8.500 10c1-2 4-2 5 0M13.500 12c-1 2-4 2-5 0" stroke="#1a70d0" strokeWidth="1.500" /></Ico></Tray>
        <Tray><Ico w={16} h={16}><path d="M8 0l8 8-8 8-8-8z" fill="#7c7c7c" /><path d="M8 0l8 8H0z" fill="#a4a4a4" /></Ico></Tray>
        <Tray><Ico w={14} h={14}><path d="M0 12L5 1h3l-4 11z" fill="#28b8c0" /><path d="M7 1l6 11h-4L6 5z" fill="#1e64b8" /><path d="M5 9h4l1 3H7z" fill="#58c850" /></Ico></Tray>
        <Tray><Ico w={16} h={10}><path d="M.7 .7h12.600v8.600H.7z" stroke="#fff" strokeWidth="1.400" /><path d="M3 3h8v4H3zM14 3h1.500v4H14z" fill="#fff" /></Ico></Tray>
        <Tray><Ico w={16} h={16}><path d="M4 14C4 8 8 3 15 2M7 14c0-4 3-8 8-8.500M10 14c0-2 2-4.500 5-4.500" stroke="#ddd" strokeWidth="1.400" /><path d="M5 5l5.500 10H0z" fill="#f8c418" /><path d="M5.200 8.500v3M5.200 12.500v1.300" stroke="#222" strokeWidth="1.300" /></Ico></Tray>
        <Tray><Ico w={16} h={14}><path d="M.6 5h2.400l3.500-3.500v11L3 9H.6z" stroke="#fff" strokeWidth="1.100" /><path d="M9 5c1 1 1 3 0 4" stroke="#fff" strokeWidth="1.200" /><path d="M11 3c2.300 2 2.300 6 0 8M13 1c3.500 3 3.500 9 0 12" stroke="#999" strokeWidth="1.200" /></Ico></Tray>
        <div className="flex w-[70px] flex-col items-center pl-px text-[11.500px] leading-[18px] tracking-[-0.350px]"><span>18:34</span><span>01/02/2018</span></div>
        <div className="flex w-[44px] justify-center pt-[4px]"><Ico w={26} h={26}><path d="M4 2h16v12h-6l-4 4v-4H4z" fill="#fff" /><path d="M6.500 5.500h11M6.500 8h11M6.500 10.500h8" stroke="#000" /><circle cx="19" cy="18" r="8" fill="#555" stroke="#000" /><text x="19" y="22" textAnchor="middle" fontSize="12" fill="#fff" fontFamily="Noto Sans">2</text></Ico></div>
        <div className="ml-[5px] h-full w-px bg-[#555]" />
        <div className="w-1" />
      </div>
    </div>
  );
}

export default function App() {
  return (
    <div className="flex h-[900px] w-[1440px] flex-col overflow-hidden bg-[#444] font-['Noto_Sans','Open_Sans',sans-serif] text-[12px] leading-none">
      <TitleBar />
      <MenuBar />
      <MainToolbar />
      <div className="flex h-[724px] shrink-0">
        <LeftBar />
        <div className="flex flex-1 flex-col">
          <Ribbon />
          <div className="flex h-[633px] shrink-0 pt-[5px]">
            <TopView />
            <OrthoView />
            <CommandPanel />
          </div>
          <Timeline />
        </div>
      </div>
      <StatusBar />
      <Taskbar />
    </div>
  );
}
